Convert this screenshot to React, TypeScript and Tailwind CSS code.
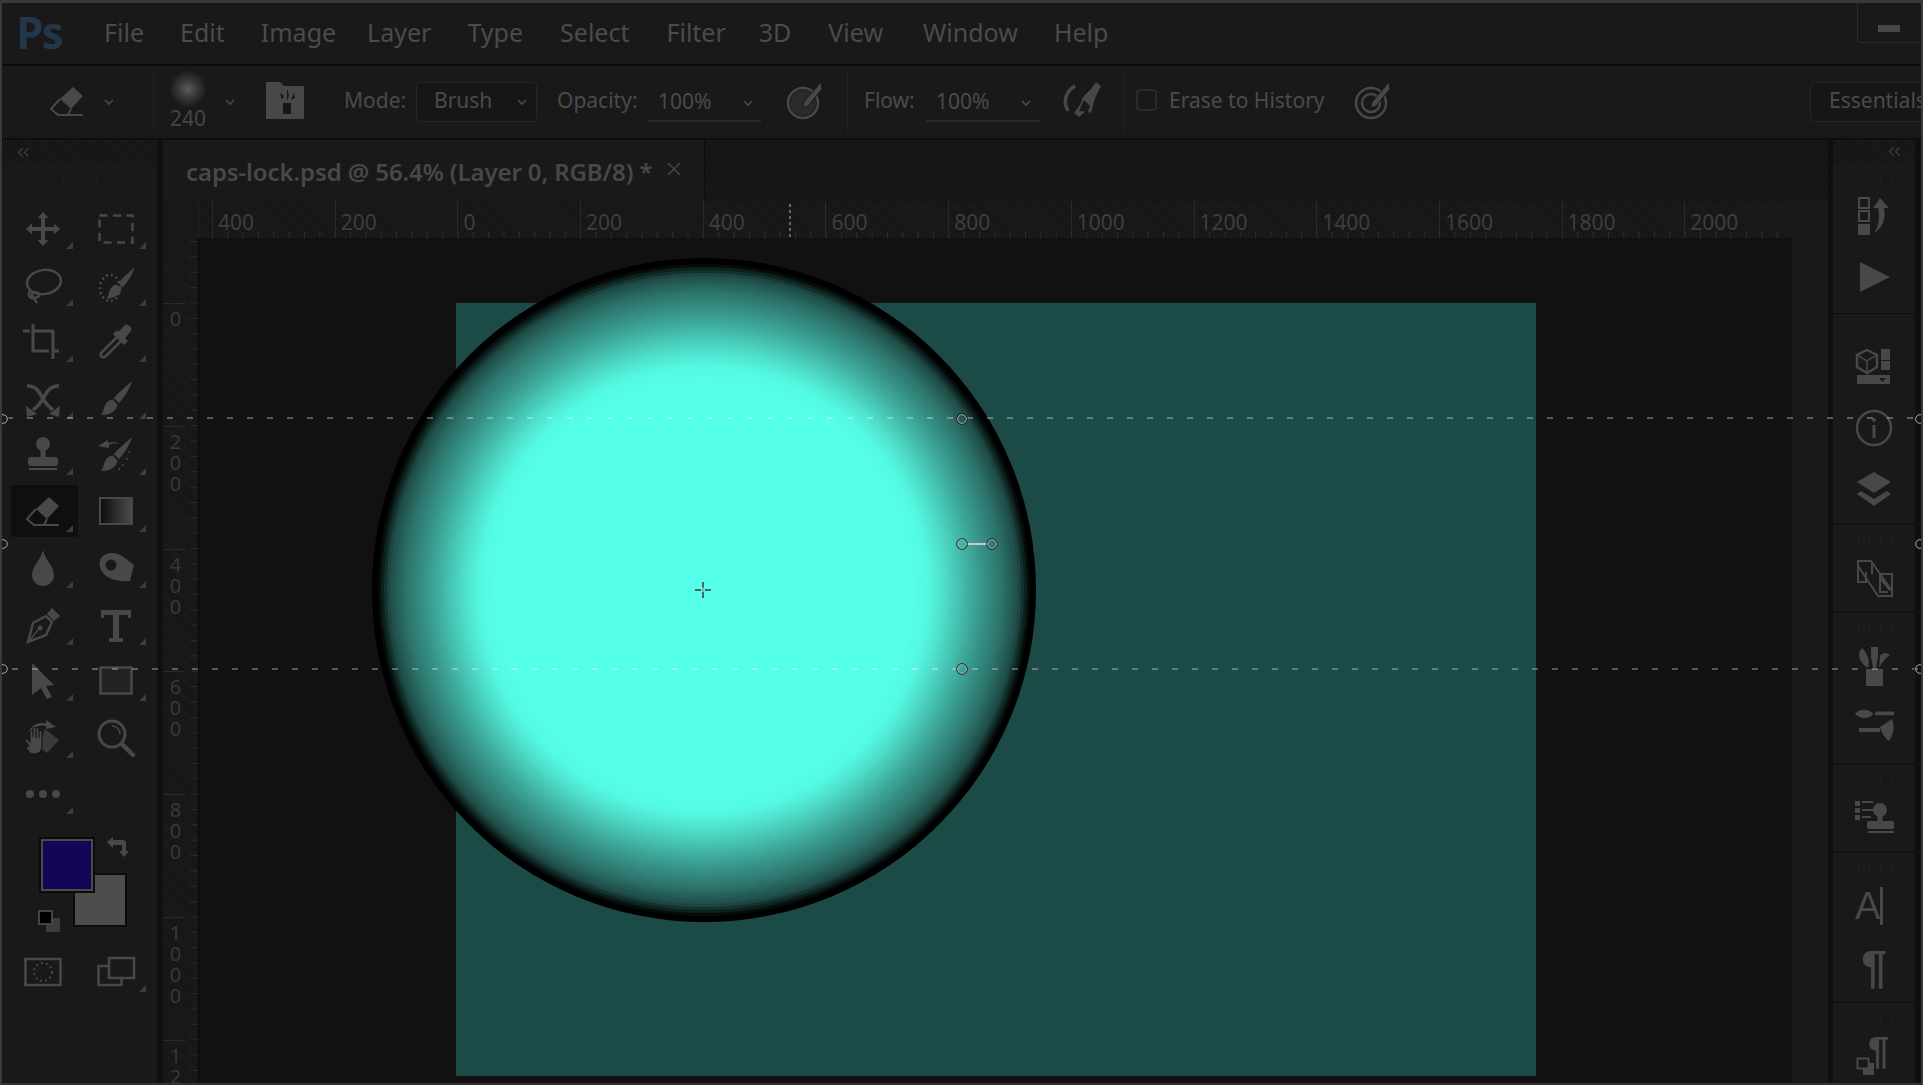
import React from "react";

const C = "#484848";

function Ico({ children, size = 40, className = "" }: { children: React.ReactNode; size?: number; className?: string }) {
  return (
    <svg width={size} height={size} viewBox="0 0 40 40" fill={C} stroke="none" className={"flex-none " + className}>
      {children}
    </svg>
  );
}

const BrushShape = ({ t = "" }: { t?: string }) => (
  <g transform={t}>
    <path d="M36 2C34 10 28 18 23 24L18 19C23 13 30 7 36 2z" />
    <path d="M16.5 20.5L21.5 25.5C21 31 15 36 5 36C8 33 7 30 9 26C10.5 23 13 21 16.5 20.5z" />
  </g>
);

const S = { fill: "none", stroke: C, strokeWidth: 2.5 } as const;

const tools: { el: React.ReactNode; active?: boolean }[] = [
  { el: <path d="M20 3l5.5 6H22v9h9v-3.5l6 5.5-6 5.5V22h-9v9h3.5L20 37l-5.5-6H18v-9H9v3.5L3 20l6-5.5V18h9V9h-3.5z" /> },
  { el: <rect x="3.5" y="6.5" width="33" height="27" {...S} strokeDasharray="8 5.5" /> },
  { el: <g {...S}><ellipse cx="21" cy="16" rx="17" ry="12" transform="rotate(-8 21 16)" /><path d="M8 24c-4 4-2 8 2 8s7-2 6-4-5-2-7 0c-1 2 2 4 5 9" /></g> },
  { el: <g><ellipse cx="14" cy="22" rx="10" ry="13" {...S} strokeDasharray="2 3" /><BrushShape t="translate(6 0) scale(.9)" /></g> },
  { el: <path {...S} strokeWidth={3} d="M0 9h7M10 9h21M10 2v27h16M29 29h7M30 9v28" /> },
  { el: <g><path {...S} d="M22 14L6 30c-3 4 0 7 4 4l16-16" /><path d="M22 10l7-7c3-2 8 3 6 6l-6 7 3 3-4 4-11-11 4-4z" /></g> },
  { el: <g><path {...S} strokeWidth={3.5} d="M4 7c10-1 14 9 16 13 3 5 6 8 10 11M36 7c-10-1-14 9-16 13-3 5-6 8-10 11" /><path d="M37 27l-1 11-10-3zM3 27l1 11 10-3z" /></g> },
  { el: <BrushShape /> },
  { el: <g><circle cx="20" cy="9" r="7" /><rect x="17.5" y="14" width="5" height="9" /><rect x="5" y="22" width="30" height="9" rx="3" /><rect x="6" y="33" width="28" height="2" /></g> },
  { el: <g><BrushShape /><path d="M2 11l10-6v3c5-2 9-1 11 1-4-1-7-1-10 1l0 3z" /><circle cx="33" cy="17" r="1" /><circle cx="31" cy="24" r="1" /><circle cx="27" cy="30" r="1" /><circle cx="23" cy="34" r="1" /></g> },
  { active: true, el: <g><path d="M26 5l10 9-12 13-11-10z" /><path {...S} strokeWidth={2} d="M13 17L4 27l7 6h10l3-6M20 33h16" /></g> },
  { el: <g><defs><linearGradient id="gr"><stop offset="0" stopColor="#0c0c0c" /><stop offset="1" stopColor="#4c4c4c" /></linearGradient></defs><rect x="4" y="6" width="32" height="26" fill="url(#gr)" stroke={C} strokeWidth="2" /></g> },
  { el: <path d="M20 2c2 10 11 16 11 25a11 11 0 0 1-22 0c0-9 9-15 11-25z" /> },
  { el: <g><path d="M4 12c4-8 14-9 22-4l12 9-4 16c-10 1-20-1-26-7C3 20 3 16 4 12z" /><circle cx="15" cy="17" r="5.5" fill="#191919" /></g> },
  { el: <g><path {...S} d="M5 37l5-19 13-7 6 6-6 13z" /><path d="M24 9l5-6 8 8-6 5z" /><path {...S} strokeWidth={1.5} d="M5 37l10-12" /><circle cx="17" cy="23" r="2.5" /></g> },
  { el: <path d="M5 5h30v8h-3v-3h-9v23h4v4H13v-4h4V10H8v3H5z" /> },
  { el: <path d="M9 2l22 22-8 1 6 11-5 2-6-11-9 7z" /> },
  { el: <rect x="4.5" y="6.5" width="31" height="26" fill="#222" stroke={C} strokeWidth="2.5" /> },
  { el: <g><path {...S} d="M7 14C10 7 17 5 24 7" /><path d="M23 2l10 7-10 2z" /><path d="M22 11l14 11-12 13-8-6z" fill="#3a3a3a" /><path stroke="#191919" strokeWidth="1.2" d="M6 28c-2-3-5-6-4-7s4 2 5 3V14a1.5 1.5 0 0 1 3 0v5-8a1.5 1.5 0 0 1 3 0v9-9a1.5 1.5 0 0 1 3 0v9-6a1.5 1.5 0 0 1 3 0v14c0 5-3 8-8 8s-6-3-8-7z" /></g> },
  { el: <g fill="none" stroke={C}><circle cx="16" cy="16" r="13" strokeWidth="3" /><path d="M26 26l11 11" strokeWidth="4.5" strokeLinecap="round" /><path d="M16 8a8 8 0 0 1 8 8" strokeWidth="1.5" /></g> },
];

function ToolCell({ el, corner = true, active = false }: { el: React.ReactNode; corner?: boolean; active?: boolean }) {
  return (
    <div className="relative w-[72.5px] h-[56.5px] flex items-center justify-center">
      {active && <div className="absolute left-[4px] top-[1px] w-[67px] h-[52px] bg-[#0f0f0f] rounded-[3px]" />}
      <Ico className="relative">{el}</Ico>
      {corner && (
        <svg width="7" height="7" viewBox="0 0 7 7" className="absolute left-[59px] top-[41px]">
          <path d="M7 0V7H0z" fill="#3c3c3c" />
        </svg>
      )}
    </div>
  );
}

function GripDots({ count, className = "" }: { count: number; className?: string }) {
  return (
    <div className={"flex gap-[10px] " + className}>
      {Array.from({ length: count }).map((_, i) => (
        <div key={i} className="w-[1px] h-[6px] bg-[#232323]" />
      ))}
    </div>
  );
}

function Chevron() {
  return (
    <svg width="10" height="7" viewBox="0 0 10 7" className="flex-none">
      <path d="M1 1l4 4 4-4" fill="none" stroke="#4a4a4a" strokeWidth="1.6" />
    </svg>
  );
}

function Collapse() {
  return (
    <svg width="13" height="9" viewBox="0 0 13 9" className="flex-none">
      <path d="M5.5 .5L1.5 4.5l4 4M11.5 .5l-4 4 4 4" fill="none" stroke="#3e3e3e" strokeWidth="1.2" />
    </svg>
  );
}

function Sep({ ml }: { ml: string }) {
  return <div className={"w-[1px] h-[58px] border-l border-dotted border-[#2a2a2a] flex-none " + ml} />;
}

function PenTarget({ kind }: { kind: "a" | "b" | "c" }) {
  if (kind === "b")
    return (
      <Ico>
        <path {...S} strokeWidth={3.5} d="M13 6C3 12 1 22 6 31" />
        <path d="M34 2l5 4-3 6-3 6-4 15-5-2-7 6-5-4 6-8 3-8 8-8z" />
        <path d="M17 31l5-11 6 6-2 6z" fill="#191919" />
      </Ico>
    );
  return (
    <Ico>
      <circle cx="17" cy="23" r="15" {...S} />
      {kind === "c" && <circle cx="17" cy="23" r="9" {...S} />}
      {kind === "a" && <circle cx="17" cy="23" r="13" fill="#2a2a2a" />}
      <path d="M35 2l1 7-14 17-5 2 1-6z" stroke="#191919" strokeWidth="1" />
    </Ico>
  );
}

const hTicks = [400, 200, 0, 200, 400, 600, 800, 1000, 1200, 1400, 1600, 1800, 2000];
const vTicks = [0, 200, 400, 600, 800, 1000, 1200];

const stops: [number, number[]][] = [
  [208, [86, 255, 232]],
  [226, [84, 248, 226]],
  [243, [78, 220, 200]],
  [276, [58, 156, 143]],
  [300, [44, 114, 106]],
  [316, [30, 76, 70]],
  [324, [10, 26, 24]],
  [328, [0, 0, 0]],
  [332, [0, 0, 0]],
];
function colorAt(r: number) {
  for (let i = 1; i < stops.length; i++) {
    if (r <= stops[i][0]) {
      const [r0, c0] = stops[i - 1];
      const [r1, c1] = stops[i];
      const t = (r - r0) / (r1 - r0);
      const c = c0.map((v, k) => Math.round(v + (c1[k] - v) * t));
      return `rgb(${c[0]},${c[1]},${c[2]})`;
    }
  }
  return "#000";
}
const rings: number[] = [];
for (let r = 332; r >= 208; r -= 3) rings.push(r);

function Handle({ x, y }: { x: number; y: number }) {
  return (
    <g fill="none">
      <circle cx={x} cy={y} r="5.3" stroke="#1c1c1c" strokeWidth="1" />
      <circle cx={x} cy={y} r="4.3" stroke="#a8a8a8" strokeWidth="1" />
    </g>
  );
}

const grp = "flex flex-col items-center pt-[33px] gap-[21px] border-b border-dotted border-[#050505] relative flex-none";

function PanelGrip() {
  return <GripDots count={4} className="absolute top-[11px] left-[25px]" />;
}

export default function App() {
  return (
    <div className="relative w-[1923px] h-[1085px] overflow-hidden flex flex-col bg-[#191919] border-t-[3px] border-l-[2px] border-r-[2px] border-b-[2px] border-t-[#38383d] border-l-[#3a3a3a] border-r-[#3a3a3a] border-b-[#333] font-['Noto_Sans',sans-serif] text-[#4b4b4b]">
      {/* Menu bar */}
      <div className="flex-none h-[61px] flex items-center text-[25px] leading-none">
        <div className="ml-[14px] w-[48px] mb-[4px] text-[#23364a] text-[44px] font-bold tracking-[-2px] leading-none font-['Open_Sans',sans-serif]">Ps</div>
        <div className="ml-[40px] mb-[2px] flex">
          <span>File</span>
          <span className="ml-[36px]">Edit</span>
          <span className="ml-[36px]">Image</span>
          <span className="ml-[31px]">Layer</span>
          <span className="ml-[36px]">Type</span>
          <span className="ml-[37px]">Select</span>
          <span className="ml-[37px]">Filter</span>
          <span className="ml-[33px]">3D</span>
          <span className="ml-[37px]">View</span>
          <span className="ml-[40px]">Window</span>
          <span className="ml-[36px]">Help</span>
        </div>
        <div className="ml-auto mr-[2px] self-start w-[62px] h-[40px] border-b border-l border-[#2a2a2a] rounded-bl-[4px] flex items-center justify-center">
          <div className="w-[22px] h-[7px] bg-[#484848] mt-[12px]" />
        </div>
      </div>
      <div className="flex-none h-[2px] bg-[#0b0b0b]" />
      {/* Options bar */}
      <div className="flex-none h-[72px] flex items-center text-[21px] leading-none whitespace-nowrap">
        <Ico className="ml-[45px]">
          <path d="M26 5l10 9-12 13-11-10z" />
          <path {...S} strokeWidth={2} d="M13 17L4 27l7 6h10l3-6M20 33h16" />
        </Ico>
        <div className="ml-[17px] flex"><Chevron /></div>
        <Sep ml="ml-[39px]" />
        <div className="ml-[14px] w-[40px] mb-[5px] flex flex-col items-center">
          <div className="w-[36px] h-[36px] rounded-full bg-[radial-gradient(circle_closest-side,#5c5c5c_0%,#3c3c3c_45%,#1c1c1c_100%)]" />
          <span className="text-[21px] leading-[22px] text-[#454545]">240</span>
        </div>
        <div className="ml-[17px] flex"><Chevron /></div>
        <svg width="38" height="37" viewBox="0 0 38 37" className="ml-[31px] mb-[4px] flex-none">
          <path d="M0 0h14l4 4h20v33H0z" fill={C} />
          <path d="M17 32h8V21h-8zM16 18l-2-7 4 3zM21 19V7l2 6zM25 18l3-7 1 5z" fill="#161616" />
        </svg>
        <span className="ml-[40px] mb-[4px] w-[60px] flex-none">Mode:</span>
        <div className="ml-[12px] w-[121px] h-[40px] pb-[4px] flex items-center rounded-[4px] border border-[#262626] bg-[#161616] flex-none">
          <span className="ml-[17px]">Brush</span>
          <div className="ml-auto mr-[9px] mt-[4px] flex"><Chevron /></div>
        </div>
        <span className="ml-[20px] mb-[4px] w-[80px] flex-none">Opacity:</span>
        <div className="ml-[11px] w-[113px] h-[40px] flex items-center border-b-[2px] border-solid border-[#2a2a2a] flex-none">
          <span className="ml-[10px]">100%</span>
          <div className="ml-auto mr-[8px] mt-[4px] flex"><Chevron /></div>
        </div>
        <div className="ml-[25px] mb-[4px] flex"><PenTarget kind="a" /></div>
        <Sep ml="ml-[21px]" />
        <span className="ml-[16px] mb-[4px] w-[51px] flex-none">Flow:</span>
        <div className="ml-[11px] w-[114px] h-[40px] flex items-center border-b-[2px] border-solid border-[#2a2a2a] flex-none">
          <span className="ml-[10px]">100%</span>
          <div className="ml-auto mr-[9px] mt-[4px] flex"><Chevron /></div>
        </div>
        <div className="ml-[22px] mb-[4px] flex"><PenTarget kind="b" /></div>
        <Sep ml="ml-[22px]" />
        <div className="ml-[11px] mb-[4px] w-[21px] h-[22px] rounded-[4px] border-2 border-[#2a2a2a] flex-none" />
        <span className="ml-[12px] mb-[4px] w-[154px] flex-none">Erase to History</span>
        <div className="ml-[31px] mb-[4px] flex"><PenTarget kind="c" /></div>
        <div className="ml-auto w-[111px] h-[40px] pb-[4px] flex items-center pl-[18px] rounded-l-[6px] border border-r-0 border-[#262626] bg-[#161616] overflow-hidden flex-none">
          Essentials
        </div>
      </div>
      <div className="flex-none h-[2px] bg-[#0d0d0d]" />

      {/* Main */}
      <div className="flex-1 min-h-0 flex">
        {/* Left toolbar */}
        <div className="w-[155px] flex-none flex flex-col">
          <div className="h-[24px] flex-none flex items-center pl-[15px] bg-[repeating-linear-gradient(45deg,#151515_0_1px,#1a1a1a_1px_2px)]">
            <Collapse />
          </div>
          <div className="h-[37px] flex-none flex justify-center items-start pt-[10px]">
            <GripDots count={4} />
          </div>
          <div className="pl-[5px] grid grid-cols-[72.5px_72.5px] auto-rows-[56.5px]">
            {tools.map((t, i) => (
              <ToolCell key={i} el={t.el} active={t.active} corner={i !== 19} />
            ))}
            <div className="relative w-[72.5px] h-[56.5px] flex items-center justify-center gap-[5px]">
              <span className="w-[8px] h-[8px] rounded-full bg-[#484848]" />
              <span className="w-[8px] h-[8px] rounded-full bg-[#484848]" />
              <span className="w-[8px] h-[8px] rounded-full bg-[#484848]" />
              <svg width="7" height="7" viewBox="0 0 7 7" className="absolute left-[59px] top-[41px]">
                <path d="M7 0V7H0z" fill="#3c3c3c" />
              </svg>
            </div>
          </div>
          {/* Colours */}
          <div className="relative flex-none h-[101px] mt-[28px]">
            <div className="absolute left-[71px] top-[22px] w-[54px] h-[54px] bg-[#4d4d4d] border-2 border-[#0c0c0c]" />
            <div className="absolute left-[39px] top-[-12px] w-[52px] h-[52px] bg-[#120757] border-[2px] border-[#4a4a4a] outline-2 outline-[#0c0c0c]" />
            <svg width="24" height="24" viewBox="0 0 24 24" className="absolute left-[105px] top-[-15px]">
              <path d="M0 6l6-5v3h9c3 0 4 1 4 4v7h3l-5 6-5-6h3V9H6v3z" fill={C} />
            </svg>
            <div className="absolute left-[44px] top-[67px] w-[14px] h-[14px] bg-[#3c3c3c]" />
            <div className="absolute left-[36px] top-[59px] w-[15px] h-[15px] bg-[#000] border-2 border-[#444]" />
          </div>
          <div className="pl-[5px] flex flex-none">
            <div className="w-[72.5px] flex items-center justify-center">
              <Ico>
                <rect x="2.5" y="7" width="35" height="26" {...S} />
                <circle cx="20" cy="20" r="9" fill="none" stroke={C} strokeWidth="2" strokeDasharray="2 3" />
              </Ico>
            </div>
            <div className="relative w-[72.5px] flex items-center justify-center">
              <Ico>
                <rect x="2.5" y="14" width="23" height="19" {...S} />
                <rect x="13" y="6" width="25" height="20" fill="#191919" stroke={C} strokeWidth="2.5" />
              </Ico>
              <svg width="7" height="7" viewBox="0 0 7 7" className="absolute left-[59px] top-[33px]">
                <path d="M7 0V7H0z" fill="#3c3c3c" />
              </svg>
            </div>
          </div>
        </div>

        <div className="w-[6px] flex-none bg-[#101010]" />

        {/* Centre */}
        <div className="w-[1665px] flex-none flex flex-col">
          {/* Tabs */}
          <div className="h-[61px] flex-none flex bg-[repeating-linear-gradient(45deg,#141414_0_1px,#181818_1px_2px)]">
            <div className="w-[542px] flex items-center bg-[#191919] border-r border-[#0e0e0e] text-[24px] font-semibold text-[#484848] whitespace-nowrap pt-[3px]">
              <span className="ml-[23px] tracking-[-.1px]">caps-lock.psd @ 56.4% (Layer 0, RGB/8) *</span>
              <svg width="14" height="14" viewBox="0 0 14 14" className="ml-[14px] mb-[6px]">
                <path d="M1 1l12 12M13 1L1 13" stroke="#444" strokeWidth="1.5" />
              </svg>
            </div>
          </div>
          {/* H ruler */}
          <div className="h-[37px] flex-none flex">
            <div className="w-[36px] flex-none bg-[#181818] border-r border-[#242424]" />
            <div className="relative w-[1593px] flex-none overflow-hidden flex pl-[13px] bg-[repeating-linear-gradient(45deg,#151515_0_1px,#1b1b1b_1px_2px)]">
              {hTicks.map((n, i) => (
                <div key={i} className="w-[122.7px] flex-none border-l border-[#2a2a2a] pl-[5px] pt-[9px] text-[21px] leading-[24px] text-[#3e3e3e]">
                  {n}
                </div>
              ))}
              <svg width="1593" height="6" className="absolute left-0 bottom-0">
                {Array.from({ length: 110 }).map((_, i) => (
                  <rect key={i} x={13 + i * 15.34} y="0" width="1" height="6" fill="#2e2e2e" />
                ))}
              </svg>
              <div className="absolute left-[590px] top-[3px] h-[34px] w-[2px] bg-[repeating-linear-gradient(180deg,#666_0_3px,transparent_3px_6px)]" />
            </div>
          </div>
          {/* Canvas row */}
          <div className="flex-1 min-h-0 flex">
            <div className="relative w-[36px] flex-none overflow-hidden flex flex-col pt-[65px] bg-[repeating-linear-gradient(45deg,#151515_0_1px,#1b1b1b_1px_2px)] border-r border-[#080808]">
              {vTicks.map((n, i) => (
                <div key={i} className="h-[122.8px] flex-none border-t border-[#2a2a2a] pt-[4px] pl-[3px] flex flex-col w-[22px] items-center text-[20px] leading-[21px] text-[#383838]">
                  {String(n).split("").map((d, k) => (
                    <span key={k}>{d}</span>
                  ))}
                </div>
              ))}
              <svg width="7" height="860" className="absolute right-0 top-0">
                {Array.from({ length: 58 }).map((_, i) => (
                  <rect key={i} x="0" y={3 + i * 15.35} width="7" height="1" fill="#2b2b2b" />
                ))}
              </svg>
            </div>
            <div className="w-[1593px] flex-none bg-[#111111] pl-[257px] pt-[65px] overflow-hidden">
              <div className="w-[1080px] h-[773px] bg-[#1b4a47]" />
            </div>
          </div>
        </div>

        {/* Right gap */}
        <div className="w-[5px] flex-none bg-[#0f0f0f]" />

        {/* Right dock */}
        <div className="w-[82px] flex-none flex flex-col">
          <div className="h-[23px] flex-none flex items-center justify-end pr-[14px] bg-[repeating-linear-gradient(45deg,#151515_0_1px,#1a1a1a_1px_2px)]">
            <Collapse />
          </div>
          <div className={grp + " h-[151px]"}>
            <PanelGrip />
            <Ico>
              <g {...S} strokeWidth={2}>
                <rect x="5" y="2" width="10" height="10" />
                <rect x="5" y="15" width="10" height="10" />
              </g>
              <rect x="4" y="28" width="12" height="11" />
              <path d="M26 2l9 10h-5c2 10-1 20-10 25 5-7 6-16 4-25h-5z" />
            </Ico>
            <Ico><path d="M6 5l30 15L6 35z" /></Ico>
          </div>
          <div className={grp + " h-[211px]"}>
            <PanelGrip />
            <Ico>
              <path d="M13 3l10 5v12l-10 6-10-6V8z" {...S} />
              <path d="M3 8l10 6 10-6M13 14v12" {...S} strokeWidth={1.5} />
              <rect x="27" y="2" width="9" height="11" />
              <rect x="27" y="14" width="9" height="9" />
              <path d="M3 28h33v9H3z" />
              <path d="M25 31h7l-3.5 4z" fill="#191919" />
            </Ico>
            <Ico>
              <circle cx="20" cy="20" r="17" {...S} />
              <rect x="18.5" y="17" width="3" height="13" />
              <circle cx="20" cy="12" r="2" />
            </Ico>
            <Ico>
              <path d="M20 3l17 10-17 11L3 13z" />
              <path d="M7 22l13 8 13-8 4 3-17 12L3 25z" />
            </Ico>
          </div>
          <div className={grp + " h-[88px]"}>
            <PanelGrip />
            <Ico>
              <path {...S} strokeWidth={2} d="M4 3h13l21 30v5H24L4 8zM4 8v16h8V14M18 5v11M26 16h12v17M26 16v18h8M26 20l10 12" />
            </Ico>
          </div>
          <div className={grp + " h-[151px]"}>
            <PanelGrip />
            <Ico>
              <rect x="12" y="23" width="17" height="17" />
              <path d="M8 2c-5 6-4 13 6 20 2-8 0-14-6-20zM17 1h7v10l-2 11h-3l-2-11zM36 9c-4-3-9-2-10 1l-1 12c3-5 6-10 11-13z" />
            </Ico>
            <Ico>
              <path d="M1 7c5-5 14-6 20 0-3 6-14 7-20 0zM23 5h21v4H23z" transform="scale(.92)" />
              <path d="M5 21h21v4H5zM26 20l12-8c3 6 2 15-3 22-4-3-8-9-9-14z" />
            </Ico>
          </div>
          <div className={grp + " h-[89px]"}>
            <PanelGrip />
            <Ico>
              <path d="M1 4h5v5H1zM1 11h5v5H1zM1 18h5v5H1zM8 4h11v2H8zM8 12h11v2H8zM8 19h9v2H8z" />
              <circle cx="26" cy="13" r="7" />
              <rect x="23.5" y="18" width="5" height="7" />
              <rect x="13" y="24" width="27" height="8" rx="2" />
              <rect x="14" y="34" width="26" height="2" />
            </Ico>
          </div>
          <div className={grp + " h-[150px]"}>
            <PanelGrip />
            <div className="w-[40px] h-[40px] flex items-center justify-start text-[#484848]">
              <span className="text-[38px] leading-[40px] font-['Liberation_Sans',sans-serif] ml-[1px]">A</span>
              <div className="w-[3px] h-[38px] bg-[#484848]" />
            </div>
            <div className="w-[40px] h-[40px] flex items-center justify-center text-[46px] leading-[40px] font-bold text-[#484848] font-['Liberation_Sans',sans-serif]">¶</div>
          </div>
          <div className="relative flex-1 flex flex-col items-center pt-[34px]">
            <PanelGrip />
            <div className="relative w-[40px] h-[40px] text-[38px] leading-[36px] font-bold text-[#484848] font-['Liberation_Sans',sans-serif]">
              <span className="absolute left-[14px] -top-[4px]">¶</span>
              <svg width="20" height="20" className="absolute left-[2px] top-[20px]">
                <rect x="7" y="6" width="11" height="12" fill={C} />
                <rect x="1.5" y="1.5" width="11" height="10" fill="#191919" stroke={C} strokeWidth="2" />
              </svg>
            </div>
          </div>
        </div>
        <div className="flex-1 bg-[#0f0f0f]" />
      </div>

      {/* Brush cursor, over the canvas */}
      <svg width="664" height="664" viewBox="0 0 664 664" className="absolute left-[370px] top-[255px]">
        {rings.map((r) => (
          <circle key={r} cx="332" cy="332" r={r} fill={colorAt(r)} />
        ))}
        <path d="M331 324v6M331 334v6M323 332h6M333 332h6" stroke="#3b3b3b" strokeWidth="1.5" />
        <path d="M331 329v5M329 332h4" stroke="#8a9a98" strokeWidth="1" />
      </svg>

      {/* Guides */}
      <div className="absolute left-[5px] right-0 top-[414px] h-[2px] opacity-30 bg-[repeating-linear-gradient(90deg,#fff_0_6px,transparent_6px_20px)]" />
      <div className="absolute left-[10px] right-0 top-[665px] h-[2px] opacity-30 bg-[repeating-linear-gradient(90deg,#fff_0_6px,transparent_6px_20px)]" />
      <div className="absolute left-[-2px] top-[416px] h-[250px] w-[2px] opacity-50 bg-[repeating-linear-gradient(180deg,#fff_0_6px,transparent_6px_20px)]" />
      <div className="absolute right-[-2px] top-[416px] h-[250px] w-[2px] opacity-50 bg-[repeating-linear-gradient(180deg,#fff_0_6px,transparent_6px_20px)]" />
      <svg width="1923" height="1085" className="absolute left-[-2px] top-[-3px] pointer-events-none">
        <path d="M967 544h20" stroke="#c8c8c8" strokeWidth="2" />
        <Handle x={962} y={419} />
        <Handle x={962} y={544} />
        <Handle x={992} y={544} />
        <Handle x={962} y={669} />
        <Handle x={3} y={419} />
        <Handle x={3} y={544} />
        <Handle x={3} y={669} />
        <Handle x={1920} y={419} />
        <Handle x={1920} y={544} />
        <Handle x={1920} y={669} />
      </svg>
    </div>
  );
}
